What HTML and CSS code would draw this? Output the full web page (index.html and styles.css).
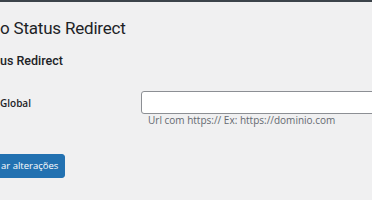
FILE: index.html
```html
<!DOCTYPE html>
<html lang="pt-BR">
<head>
    <meta charset="UTF-8">
    <meta name="viewport" content="width=device-width, initial-scale=1.0">
    <title>Status Redirect</title>
    <link rel="stylesheet" href="styles.css">
</head>
<body>
    <div class="admin-bar"></div>
    <div class="wrap">
        <h1 class="page-title">o Status Redirect</h1>
        <h2 class="section-title">us Redirect</h2>
        <div class="form-row">
            <label class="field-label" for="urlGlobal">Global</label>
            <div class="field">
                <input type="text" id="urlGlobal" class="regular-text">
                <p class="description">Url com https:// Ex: https://dominio.com</p>
            </div>
        </div>
        <div class="submit-row">
            <button class="button-primary">ar alterações</button>
        </div>
    </div>
</body>
</html>
```

FILE: styles.css
```css
body {
    margin: 0;
    background-color: #f0f0f1;
    color: #1d2327;
    font-family: 'Open Sans', sans-serif;
    overflow: hidden;
}
.admin-bar {
    height: 2px;
    background-color: #3c434a;
}
.wrap {
    padding: 0;
}
.page-title {
    font-family: 'Roboto', sans-serif;
    font-size: 17px;
    font-weight: 400;
    letter-spacing: -0.2px;
    margin: 14px 0 0 0;
    line-height: 24px;
}
.section-title {
    font-family: 'Roboto', sans-serif;
    font-size: 12.5px;
    font-weight: 500;
    margin: 12px 0 0 0;
    line-height: 18px;
}
.form-row {
    display: flex;
    margin-top: 21px;
}
.field-label {
    flex-shrink: 0;
    width: 141px;
    font-size: 10px;
    font-weight: 600;
    padding-top: 5px;
    line-height: 14px;
}
.field {
    flex-grow: 1;
    min-width: 0;
    overflow: hidden;
}
.regular-text {
    display: block;
    box-sizing: border-box;
    width: 300px;
    height: 23px;
    margin: 0;
    border: 1px solid #8c8f94;
    border-radius: 3px;
    background-color: #fff;
}
.description {
    margin: -1px 0 0 7px;
    font-size: 10px;
    line-height: 14px;
    color: #646970;
    white-space: nowrap;
}
.submit-row {
    margin-top: 25px;
}
.button-primary {
    height: 24px;
    margin-left: -6px;
    padding: 0 6px 0 6px;
    border: 1px solid #2271b1;
    border-radius: 3px;
    background-color: #2271b1;
    color: #fff;
    font-family: 'Open Sans', sans-serif;
    font-size: 9.5px;
}
```
